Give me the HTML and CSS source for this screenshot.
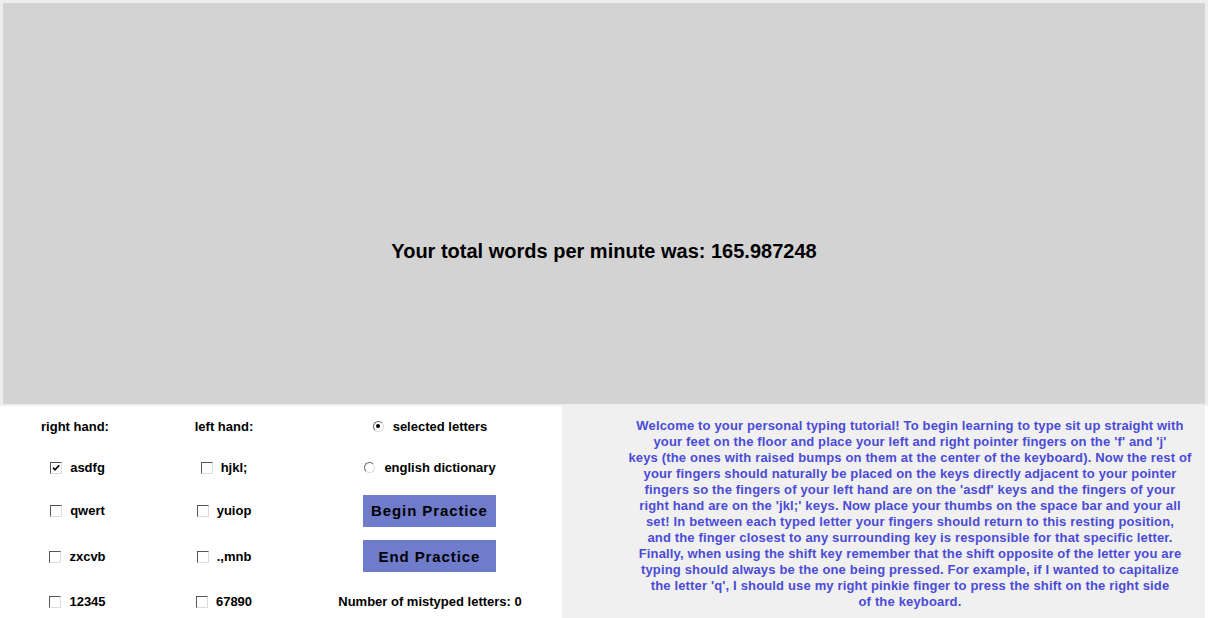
FILE: index.html
```html
<!DOCTYPE html>
<html>
<head>
<meta charset="utf-8">
<title>Typing Tutorial</title>
<link rel="stylesheet" href="styles.css">
</head>
<body>
<div class="page">
  <div class="stage">
    <div class="result">Your total words per minute was: 165.987248</div>
  </div>
  <div class="bottom">
    <div class="controls">
      <div class="cell head">right hand:</div>
      <div class="cell head">left hand:</div>
      <div class="cell opt"><span class="radio on"></span><span>selected letters</span></div>

      <div class="cell opt first"><span class="check on"><svg viewBox="0 0 10 10" width="10" height="10"><path d="M2 4.6 L4 6.8 L8.2 2.2" fill="none" stroke="#000" stroke-width="1.6"/></svg></span><span>asdfg</span></div>
      <div class="cell opt"><span class="check"></span><span>hjkl;</span></div>
      <div class="cell opt"><span class="radio"></span><span>english dictionary</span></div>

      <div class="cell opt first"><span class="check"></span><span>qwert</span></div>
      <div class="cell opt"><span class="check"></span><span>yuiop</span></div>
      <div class="cell"><button class="btn begin">Begin Practice</button></div>

      <div class="cell opt first"><span class="check"></span><span>zxcvb</span></div>
      <div class="cell opt"><span class="check"></span><span>.,mnb</span></div>
      <div class="cell"><button class="btn end">End Practice</button></div>

      <div class="cell opt first"><span class="check"></span><span>12345</span></div>
      <div class="cell opt"><span class="check"></span><span>67890</span></div>
      <div class="cell head">Number of mistyped letters: 0</div>
    </div>
    <div class="info">
      <p class="intro">Welcome to your personal typing tutorial! To begin learning to type sit up straight with<br>
your feet on the floor and place your left and right pointer fingers on the 'f' and 'j'<br>
keys (the ones with raised bumps on them at the center of the keyboard). Now the rest of<br>
your fingers should naturally be placed on the keys directly adjacent to your pointer<br>
fingers so the fingers of your left hand are on the 'asdf' keys and the fingers of your<br>
right hand are on the 'jkl;' keys. Now place your thumbs on the space bar and your all<br>
set! In between each typed letter your fingers should return to this resting position,<br>
and the finger closest to any surrounding key is responsible for that specific letter.<br>
Finally, when using the shift key remember that the shift opposite of the letter you are<br>
typing should always be the one being pressed. For example, if I wanted to capitalize<br>
the letter 'q', I should use my right pinkie finger to press the shift on the right side<br>
of the keyboard.</p>
    </div>
  </div>
</div>
</body>
</html>
```

FILE: styles.css
```css
html, body {
  margin: 0;
  padding: 0;
  background: #ffffff;
}

body {
  font-family: "Liberation Sans", Arial, sans-serif;
  color: #000;
  width: 1208px;
  height: 618px;
  overflow: hidden;
}

.page {
  display: flex;
  flex-direction: column;
}

.stage {
  height: 401px;
  background: #d3d3d3;
  border: 3px solid #eeeeee;
  border-bottom-width: 2px;
}

.result {
  padding-top: 237px;
  text-align: center;
  font-size: 20px;
  font-weight: bold;
  line-height: 23px;
}

.bottom {
  display: flex;
  height: 212px;
}

.controls {
  width: 562px;
  flex: none;
  display: grid;
  grid-template-columns: 150px 148px 264px;
  grid-template-rows: 40px 42px 45px 46px 44px;
  font-size: 13px;
  font-weight: bold;
}

.cell {
  display: flex;
  align-items: center;
  justify-content: center;
}

.opt {
  gap: 8px;
}

.opt.first {
  padding-left: 5px;
}

.check {
  width: 10px;
  height: 10px;
  display: inline-flex;
  align-items: center;
  justify-content: center;
  background: #fff;
  border-style: solid;
  border-width: 1px;
  border-color: #555 #dcdcdc #dcdcdc #555;
  margin-top: 1px;
}

.check svg {
  display: block;
}

.radio {
  width: 9px;
  height: 9px;
  border-radius: 50%;
  background: #fff;
  border-style: solid;
  border-width: 1px;
  border-color: #666 #dcdcdc #dcdcdc #666;
  position: relative;
  margin-right: 1px;
}

.radio.on::after {
  content: "";
  position: absolute;
  left: 2.5px;
  top: 2.5px;
  width: 4px;
  height: 4px;
  border-radius: 50%;
  background: #000;
}

.btn {
  font-family: "Liberation Sans", Arial, sans-serif;
  font-weight: bold;
  font-size: 15px;
  letter-spacing: 0.9px;
  text-indent: 0.9px;
  background: #6f7bcb;
  color: #000;
  border: none;
  height: 32px;
  width: 133px;
  padding: 0;
  margin: 0 2px 0 0;
}

.info {
  flex: 1;
  background: #f0f0f0;
  margin-right: 3px;
  padding: 12px 0 0 53px;
}

.intro {
  margin: 0;
  text-align: center;
  font-size: 13px;
  font-weight: bold;
  line-height: 16px;
  letter-spacing: 0.16px;
  color: #4b4bd6;
  white-space: nowrap;
}
```
